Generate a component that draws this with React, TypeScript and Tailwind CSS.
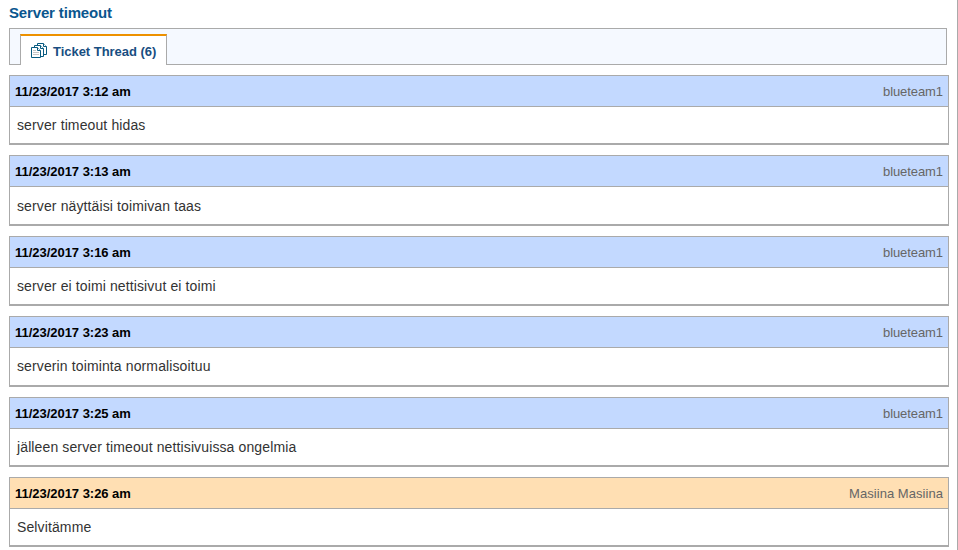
type Entry = { time: string; author: string; text: string; height: string; header?: string; authorSpacing?: string; bodyPadding?: string };

const entries: Entry[] = [
  { time: '11/23/2017 3:12 am', author: 'blueteam1', text: 'server timeout hidas', height: 'h-[70px]' },
  { time: '11/23/2017 3:13 am', author: 'blueteam1', text: 'server näyttäisi toimivan taas', height: 'h-[71px]' },
  { time: '11/23/2017 3:16 am', author: 'blueteam1', text: 'server ei toimi nettisivut ei toimi', height: 'h-[70px]' },
  { time: '11/23/2017 3:23 am', author: 'blueteam1', text: 'serverin toiminta normalisoituu', height: 'h-[71px]', bodyPadding: 'pb-[2px]' },
  { time: '11/23/2017 3:25 am', author: 'blueteam1', text: 'jälleen server timeout nettisivuissa ongelmia', height: 'h-[70px]' },
  { time: '11/23/2017 3:26 am', author: 'Masiina Masiina', text: 'Selvitämme', height: 'h-[70px]', header: 'bg-[#ffdfb3]', authorSpacing: 'tracking-[0.05px]' },
];

function ThreadIcon() {
  return (
    <svg className="shrink-0" width="16" height="15" viewBox="0 0 16 15" fill="#fff" stroke="#075a80">
      <path d="M6.5 10.5V.5H12.5L15.5 3.5V11.5H6.5" />
      <path d="M12.5 .5V3.5H15.5" />
      <path d="M3.5 12.5V2.5H9.5L12.5 5.5V13.5H3.5" />
      <path d="M9.5 2.5V5.5H12.5" />
      <path d="M.5 4.5H6.5L9.5 7.5V14.5H.5Z" />
      <path d="M6.5 4.5V7.5H9.5" />
      <path d="M2 7.5H5M2 9.5H8M2 11.5H8" stroke="#c5c5c5" />
    </svg>
  );
}

function ThreadEntry({ entry }: { entry: Entry }) {
  return (
    <article className={`flex flex-col border border-b-2 border-[#aaa] ${entry.height}`}>
      <header className={`flex h-[31px] shrink-0 items-center justify-between border-b border-[#aaa] px-[5px] pt-[2px] text-[13px] leading-[28px] ${entry.header ?? 'bg-[#c3d9ff]'}`}>
        <span className="font-bold tracking-[-0.03px] text-black">{entry.time}</span>
        <span className={`text-[#666] ${entry.authorSpacing ?? 'tracking-[-0.08px]'}`}>{entry.author}</span>
      </header>
      <div className={`flex flex-1 items-center px-[7px] text-[14px] leading-[20px] tracking-[0.12px] text-[#333] ${entry.bodyPadding ?? ''}`}>{entry.text}</div>
    </article>
  );
}

export default function App() {
  return (
    <div className="h-[550px] w-[958px] overflow-hidden border-r border-[#aaa] bg-white pl-[9px] font-['Liberation_Sans',Arial,sans-serif]">
      <h2 className="h-[28px] pt-[3px] text-[15px] leading-[20px] font-bold tracking-[-0.15px] text-[#0a568e]">Server timeout</h2>
      <div className="flex h-[37px] w-[938px] border border-[#aaa] bg-[#f5f9ff] pt-[5px] pl-[10px]">
        <div className="flex h-[31px] w-[147px] items-center border-x border-t-2 border-x-[#aaa] border-t-[#ed9100] bg-white pl-[10px] text-[13px] font-bold text-[#184e81]">
          <ThreadIcon />
          <span className="ml-[6px] pt-[2px] tracking-[-0.03px] whitespace-nowrap">Ticket Thread (6)</span>
        </div>
      </div>
      <main className="mt-[10px] flex w-[940px] flex-col gap-[10px]">
        {entries.map((entry) => <ThreadEntry key={entry.time} entry={entry} />)}
      </main>
    </div>
  );
}
